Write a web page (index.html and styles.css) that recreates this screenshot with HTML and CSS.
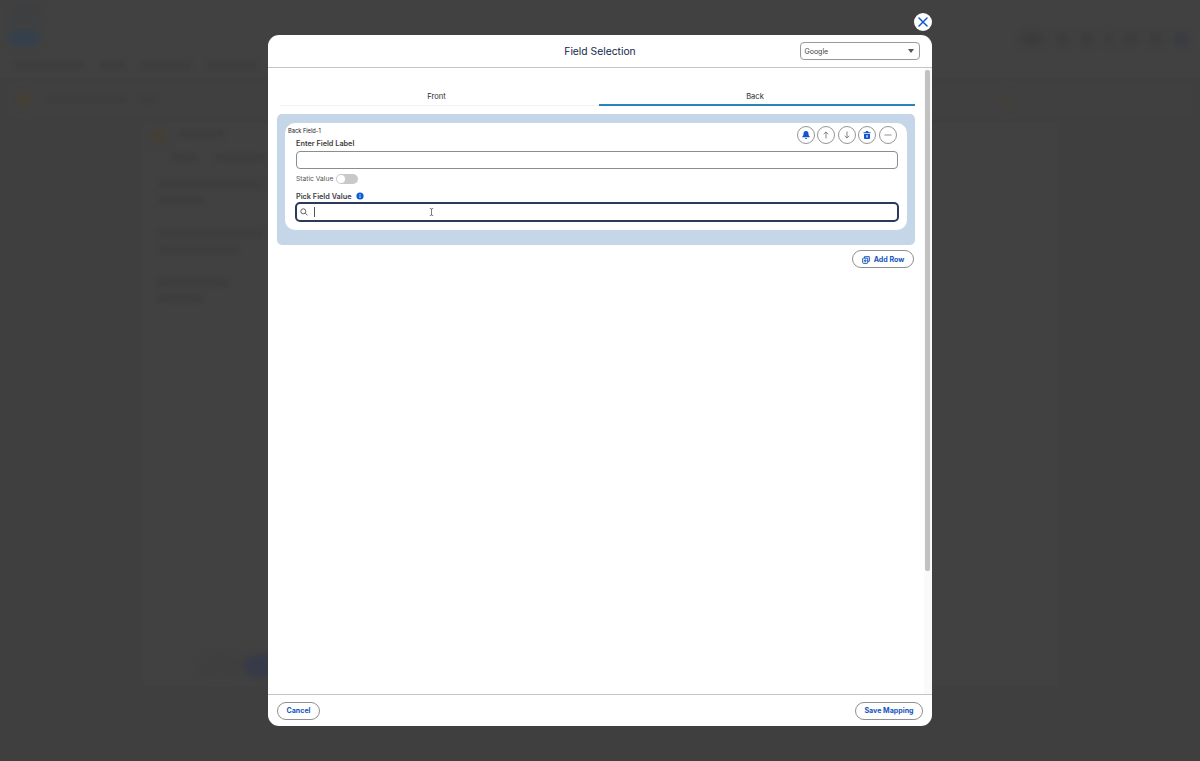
FILE: index.html
```html
<!DOCTYPE html>
<html lang="en">
<head>
    <meta charset="UTF-8">
    <meta name="viewport" content="width=device-width, initial-scale=1.0">
    <title>Field Selection</title>
    <link rel="stylesheet" href="styles.css">
</head>
<body>
    <!-- dimmed page behind the modal -->
    <div class="page" aria-hidden="true">
        <div class="topbar">
            <div class="brand">
                <span class="blob blob-logo"></span>
                <span class="blob blob-blue"></span>
            </div>
            <div class="tools">
                <span class="blob blob-wide"></span>
                <span class="blob"></span>
                <span class="blob"></span>
                <span class="blob blob-thin"></span>
                <span class="blob"></span>
                <span class="blob"></span>
                <span class="blob blob-user"></span>
            </div>
        </div>
        <div class="nav">
            <span class="bar w70"></span>
            <span class="bar w25"></span>
            <span class="bar w50"></span>
            <span class="bar w50"></span>
        </div>
        <div class="record">
            <span class="blob blob-gold"></span>
            <span class="bar w80"></span>
            <span class="bar w15"></span>
            <span class="blob blob-gold blob-far"></span>
        </div>
        <div class="panel">
            <div class="panel-head">
                <span class="blob blob-gold"></span>
                <span class="bar w45"></span>
            </div>
            <div class="panel-tabs">
                <span class="bar w25"></span>
                <span class="bar w50"></span>
            </div>
            <div class="panel-row"><span class="bar"></span><span class="bar w45"></span></div>
            <div class="panel-row"><span class="bar"></span><span class="bar w80"></span></div>
            <div class="panel-row"><span class="bar w70"></span><span class="bar w45"></span></div>
            <div class="panel-foot">
                <span class="pill"></span>
                <span class="pill pill-blue"></span>
            </div>
        </div>
    </div>

    <div class="overlay">
        <div class="modal">
            <button class="close" aria-label="Close">
                <svg viewBox="0 0 18 18"><path d="M5 5l8 8M13 5l-8 8"/></svg>
            </button>

            <div class="modal-header">
                <h2 class="title">Field Selection</h2>
                <div class="select">
                    <span>Google</span>
                    <svg class="caret" viewBox="0 0 6 4"><path d="M0 0h6L3 4z"/></svg>
                </div>
            </div>

            <div class="modal-body">
                <div class="content">
                    <div class="tabs">
                        <div class="tab">Front</div>
                        <div class="tab active">Back</div>
                    </div>

                    <div class="fields">
                        <div class="field-card">
                            <div class="card-top">
                                <span class="card-name">Back Field-1</span>
                                <div class="actions">
                                    <button class="icon-btn"><svg viewBox="0 0 10 10"><path class="solid" d="M5 1C3.3 1 2.5 2.2 2.5 3.7c0 1.8-.5 2.2-1.1 2.7-.4.4-.2.9.3.9h6.6c.5 0 .7-.5.3-.9-.6-.5-1.1-.9-1.1-2.7C7.5 2.2 6.7 1 5 1zM3.9 7.9a1.1 1.1 0 0 0 2.2 0z"/></svg></button>
                                    <button class="icon-btn"><svg viewBox="0 0 10 10"><path class="line" d="M5 8.5V2M2.7 4.2L5 1.9l2.3 2.3"/></svg></button>
                                    <button class="icon-btn"><svg viewBox="0 0 10 10"><path class="line" d="M5 1.5V8M2.7 5.8L5 8.1l2.300-2.300"/></svg></button>
                                    <button class="icon-btn"><svg viewBox="0 0 10 10"><path class="solid" fill-rule="evenodd" d="M1.500 2.200h2.100v-.5c0-.5.3-.8.8-.8h1.200c.5 0 .8.3.8.8v.5h2.100v1.100h-7zM2 4h6v4c0 .6-.4 1-1 1H3c-.6 0-1-.4-1-1zM4 5.200v2.300h.6V5.200zm1.400 0v2.300h.6V5.200z"/></svg></button>
                                    <button class="icon-btn"><svg viewBox="0 0 10 10"><path class="line thin" d="M1.500 5h7"/></svg></button>
                                </div>
                            </div>

                            <label class="label">Enter Field Label</label>
                            <div class="input"></div>

                            <div class="static">
                                <span>Static Value</span>
                                <span class="toggle"></span>
                            </div>

                            <div class="label pick">
                                <span>Pick Field Value</span>
                                <svg class="info" viewBox="0 0 8 8"><circle cx="4" cy="4" r="3.600"/><path d="M4 3.600v2.200M4 2v.8"/></svg>
                            </div>
                            <div class="input focused">
                                <svg class="search" viewBox="0 0 8 8"><circle cx="3.300" cy="3.300" r="2.500"/><path d="M5.200 5.200L7.500 7.300"/></svg>
                                <span class="text-caret"></span>
                                <svg class="ibeam" viewBox="0 0 5 8"><path d="M.8.600h1.200l.5.400.5-.4h1.200M2.500 1v6M.8 7.400h1.200l.5-.4.5.4h1.200"/></svg>
                            </div>
                        </div>
                    </div>

                    <button class="btn add-row">
                        <svg viewBox="0 0 8 8"><path d="M2.500.7h4.800v4.600h-1.200M2.500.7v1.200"/><rect x=".7" y="2.200" width="5" height="5.100" rx=".7"/><path d="M3.200 3.400v2.700M1.900 4.750h2.700"/></svg>
                        <span>Add Row</span>
                    </button>
                </div>
                <div class="scroll"><div class="thumb"></div></div>
            </div>

            <div class="modal-footer">
                <button class="btn cancel">Cancel</button>
                <button class="btn save">Save Mapping</button>
            </div>
        </div>
    </div>
</body>
</html>
```

FILE: styles.css
```css
* {
    box-sizing: border-box;
}
body {
    margin: 0;
    height: 761px;
    overflow: hidden;
    background: #3f3f3f;
    font-family: Inter, "Liberation Sans", sans-serif;
    color: #2e2e2e;
}
button {
    font-family: inherit;
    padding: 0;
    background: #fff;
    cursor: pointer;
}

/* page behind */
.page {
    height: 761px;
    overflow: hidden;
}
.topbar {
    height: 56px;
    padding: 3px 12px 0 9px;
    background: #414141;
    display: flex;
    justify-content: space-between;
}
.brand {
    display: flex;
    flex-direction: column;
    gap: 7px;
}
.tools {
    display: flex;
    gap: 11px;
    padding-top: 29px;
}
.blob {
    width: 14px;
    height: 14px;
    border-radius: 7px;
    background: #3c3c3d;
    filter: blur(3px);
}
.blob-logo {
    width: 32px;
    height: 20px;
    background: #3e3f41;
}
.blob-blue {
    width: 30px;
    height: 16px;
    background: #34404c;
}
.blob-wide {
    width: 24px;
}
.blob-thin {
    width: 8px;
}
.blob-user {
    background: #3a3b43;
}
.blob-gold {
    background: #453f33;
    flex: none;
}
.bar {
    display: block;
    width: 105px;
    height: 7px;
    background: #3d3d3d;
    filter: blur(2px);
}
.w15 { width: 15px; }
.w25 { width: 25px; }
.w45 { width: 45px; }
.w50 { width: 50px; }
.w70 { width: 70px; }
.w80 { width: 80px; }
.nav {
    height: 22px;
    padding: 6px 14px;
    background: #414141;
    display: flex;
    gap: 16px;
}
.record {
    height: 34px;
    margin: 5px 8px 6px;
    padding: 10px 100px 0 10px;
    background: #404040;
    display: flex;
    gap: 14px;
}
.record .bar {
    margin-top: 3px;
}
.blob-far {
    margin-left: auto;
    margin-right: 78px;
    background: #42403a;
}
.panel {
    width: 915px;
    height: 563px;
    margin-left: 143px;
    padding: 7px 15px;
    padding-left: 8px;
    border-radius: 3px;
    background: #414141;
    display: flex;
    flex-direction: column;
}
.panel-head,
.panel-tabs {
    display: flex;
    gap: 14px;
}
.panel-tabs {
    padding: 10px 0 0 21px;
    gap: 18px;
}
.panel-row {
    height: 49px;
    padding: 20px 0 0 7px;
    display: flex;
    flex-direction: column;
    gap: 9px;
}
.panel-foot {
    display: flex;
    gap: 3px;
    margin: auto 0 2px 48px;
}
.pill {
    width: 42px;
    height: 22px;
    border-radius: 11px;
    background: #3f3f3f;
    filter: blur(3px);
}
.pill-blue {
    background: #373a48;
}

/* modal */
.overlay {
    position: absolute;
    inset: 0;
    padding-top: 35px;
}
.modal {
    position: relative;
    width: 664px;
    height: 691px;
    margin: 0 auto;
    border-radius: 11px;
    background: #fff;
    display: flex;
    flex-direction: column;
}
.close {
    position: absolute;
    top: -22px;
    right: 0;
    width: 18px;
    height: 18px;
    border: 0;
    border-radius: 50%;
}
.close svg {
    display: block;
    width: 18px;
    height: 18px;
    fill: none;
    stroke: #1258c8;
    stroke-width: 1.5;
    stroke-linecap: round;
}
.modal-header {
    flex: none;
    height: 33px;
    padding: 0 12.5px;
    border-bottom: 1px solid #c4c4c4;
    display: grid;
    grid-template-columns: 120px 1fr 120px;
    align-items: center;
}
.title {
    grid-column: 2;
    margin: 0;
    text-align: center;
    font-size: 10.300px;
    font-weight: 400;
    color: #14264c;
}
.select {
    height: 18px;
    padding: 0 5px 0 4px;
    border: 1px solid #999;
    border-radius: 4px;
    display: flex;
    align-items: center;
    justify-content: space-between;
    font-size: 7px;
    color: #444;
}
.caret {
    width: 6px;
    height: 4px;
    fill: #555;
}
.modal-body {
    flex: 1;
    padding-left: 9px;
    display: flex;
    justify-content: space-between;
}
.content {
    width: 638px;
}
.tabs {
    height: 38px;
    padding: 0 0 0 3px;
    display: flex;
}
.tab {
    width: 319px;
    padding-top: 22px;
    padding-right: 6px;
    border-bottom: 1px solid #f3f3f3;
    text-align: center;
    font-size: 7.600px;
    line-height: 13px;
}
.tab.active {
    width: 316px;
    padding-right: 4px;
    border-bottom: 2px solid #2b84b8;
}
.fields {
    height: 131px;
    margin-top: 8px;
    padding: 9px 8px;
    border-radius: 5px;
    background: #c5d6e8;
}
.field-card {
    height: 107px;
    padding: 3px 9px 0 11px;
    border-radius: 10px;
    background: #fff;
}
.card-top {
    height: 12px;
    display: flex;
    justify-content: space-between;
}
.card-name {
    margin-left: -8px;
    font-size: 5.700px;
    line-height: 9px;
    color: #222;
}
.actions {
    display: flex;
    gap: 2.500px;
    margin-right: 1.500px;
}
.icon-btn {
    width: 18px;
    height: 18px;
    border: 1px solid #969696;
    border-radius: 50%;
    display: flex;
    align-items: center;
    justify-content: center;
}
.icon-btn svg {
    width: 10px;
    height: 10px;
}
.solid {
    fill: #1554d1;
}
.line {
    fill: none;
    stroke: #777;
    stroke-width: .9;
}
.line.thin {
    stroke-width: .8;
}
.label {
    display: block;
    height: 10px;
    font-size: 7.300px;
    font-weight: 600;
    line-height: 11px;
    color: #3c3c3c;
}
.input {
    height: 18px;
    margin-top: 3px;
    border: 1px solid #8c8c8c;
    border-radius: 4px;
}
.static {
    height: 12px;
    margin-top: 4px;
    display: flex;
    align-items: center;
    gap: 3px;
    font-size: 6.700px;
    color: #555;
}
.toggle {
    width: 22px;
    height: 10px;
    padding: 1px;
    border-radius: 5px;
    background: #c9c9c9;
}
.toggle::before {
    content: "";
    display: block;
    width: 8px;
    height: 8px;
    border-radius: 50%;
    background: #fff;
}
.pick {
    margin-top: 6px;
    display: flex;
    align-items: center;
    gap: 5px;
}
.info {
    width: 8px;
    height: 8px;
}
.info circle {
    fill: #0b5cd5;
}
.info path {
    stroke: #fff;
    stroke-width: .9;
}
.input.focused {
    height: 20px;
    margin: 1px -1px 0;
    padding-left: 3px;
    border: 2px solid #2b3a58;
    border-radius: 5px;
    display: flex;
    align-items: center;
}
.search {
    width: 8px;
    height: 8px;
    fill: none;
    stroke: #555;
    stroke-width: .9;
}
.text-caret {
    width: 1px;
    height: 10px;
    margin-left: 6px;
    background: #555;
}
.ibeam {
    width: 5px;
    height: 8px;
    margin-left: 114px;
    fill: none;
    stroke: #444;
    stroke-width: .7;
}
.btn {
    height: 18px;
    border: 1px solid #8f8f8f;
    border-radius: 9px;
    display: flex;
    align-items: center;
    justify-content: center;
    font-size: 7.100px;
    font-weight: 700;
    color: #1656bd;
}
.add-row {
    width: 62px;
    margin: 5px 1px 0 auto;
    gap: 4px;
}
.add-row svg {
    width: 8px;
    height: 8px;
    margin-top: 1px;
    fill: none;
    stroke: #1656bd;
}
.scroll {
    width: 8px;
    padding: 2px 2px 0 1px;
    background: #fafafa;
}
.thumb {
    height: 501px;
    border-radius: 2px;
    background: #c1c1c1;
}
.modal-footer {
    flex: none;
    height: 32px;
    padding: 0 9px;
    border-top: 1px solid #c4c4c4;
    display: flex;
    align-items: center;
    justify-content: space-between;
}
.cancel {
    width: 43px;
}
.save {
    width: 68px;
}
```
